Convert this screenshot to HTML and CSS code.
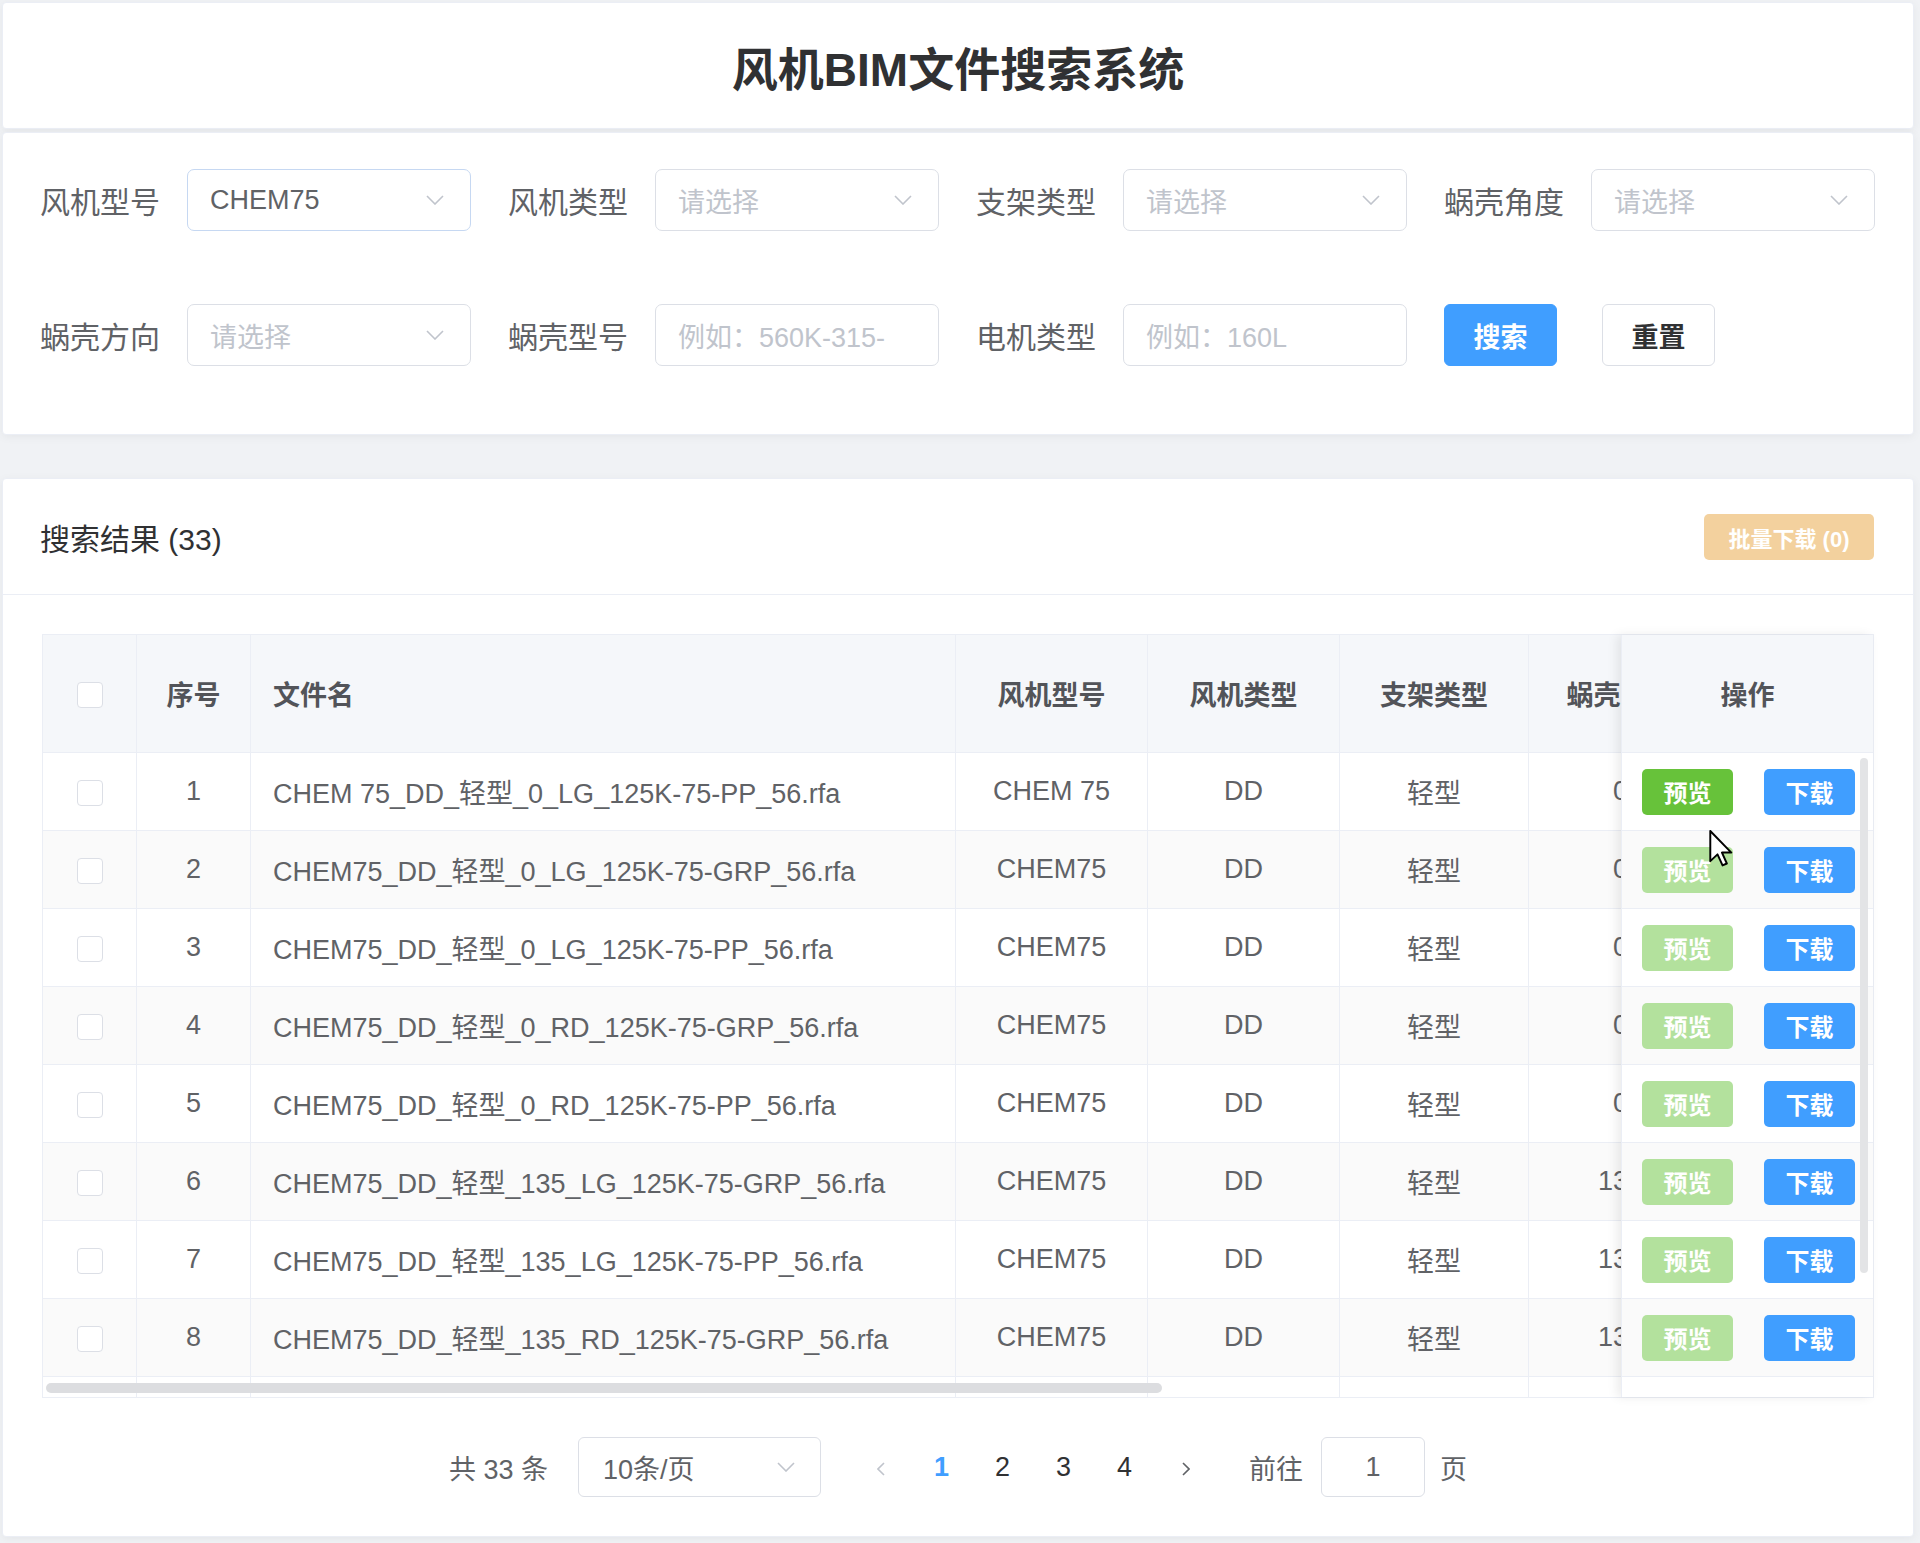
FILE: index.html
```html
<!DOCTYPE html>
<html lang="zh-CN">
<head>
    <meta charset="UTF-8">
    <meta name="viewport" content="width=device-width, initial-scale=1.0">
    <title>风机BIM文件搜索系统</title>
    <link rel="stylesheet" href="styles.css">
</head>
<body>
    <!-- 标题 -->
    <div class="card page-header">
        <h1>风机BIM文件搜索系统</h1>
    </div>

    <!-- 搜索条件 -->
    <div class="card search-card">
        <div class="search-form">
            <div class="form-item">
                <label class="form-label">风机型号</label>
                <div class="select is-hover">
                    <span class="value">CHEM75</span>
                    <svg class="chevron" viewBox="0 0 18 10" width="18" height="10"><polyline points="1,1 9,9 17,1"/></svg>
                </div>
            </div>
            <div class="form-item">
                <label class="form-label">风机类型</label>
                <div class="select">
                    <span class="placeholder">请选择</span>
                    <svg class="chevron" viewBox="0 0 18 10" width="18" height="10"><polyline points="1,1 9,9 17,1"/></svg>
                </div>
            </div>
            <div class="form-item">
                <label class="form-label">支架类型</label>
                <div class="select">
                    <span class="placeholder">请选择</span>
                    <svg class="chevron" viewBox="0 0 18 10" width="18" height="10"><polyline points="1,1 9,9 17,1"/></svg>
                </div>
            </div>
            <div class="form-item">
                <label class="form-label">蜗壳角度</label>
                <div class="select">
                    <span class="placeholder">请选择</span>
                    <svg class="chevron" viewBox="0 0 18 10" width="18" height="10"><polyline points="1,1 9,9 17,1"/></svg>
                </div>
            </div>
            <div class="form-item">
                <label class="form-label">蜗壳方向</label>
                <div class="select">
                    <span class="placeholder">请选择</span>
                    <svg class="chevron" viewBox="0 0 18 10" width="18" height="10"><polyline points="1,1 9,9 17,1"/></svg>
                </div>
            </div>
            <div class="form-item">
                <label class="form-label">蜗壳型号</label>
                <div class="input"><span class="placeholder">例如：560K-315-</span></div>
            </div>
            <div class="form-item">
                <label class="form-label">电机类型</label>
                <div class="input"><span class="placeholder">例如：160L</span></div>
            </div>
            <div class="form-item form-buttons">
                <button class="btn btn-primary">搜索</button>
                <button class="btn btn-default">重置</button>
            </div>
        </div>
    </div>

    <!-- 搜索结果 -->
    <div class="card result-card">
        <div class="result-header">
            <span class="result-title">搜索结果 (33)</span>
            <button class="btn-batch" disabled>批量下载 (0)</button>
        </div>

        <div class="result-body">
            <div class="table">
                <div class="table-main">
                    <table class="data-table">
                        <colgroup>
                            <col style="width:94px">
                            <col style="width:114px">
                            <col style="width:705px">
                            <col style="width:192px">
                            <col style="width:192px">
                            <col style="width:189px">
                            <col style="width:184px">
                        </colgroup>
                        <thead>
                            <tr>
                                <th><span class="checkbox"></span></th>
                                <th>序号</th>
                                <th class="left">文件名</th>
                                <th>风机型号</th>
                                <th>风机类型</th>
                                <th>支架类型</th>
                                <th>蜗壳角度</th>
                            </tr>
                        </thead>
                        <tbody>
                            <tr>
                                <td><span class="checkbox"></span></td><td>1</td>
                                <td class="left">CHEM 75_DD_轻型_0_LG_125K-75-PP_56.rfa</td>
                                <td>CHEM 75</td><td>DD</td><td>轻型</td><td>0</td>
                            </tr>
                            <tr>
                                <td><span class="checkbox"></span></td><td>2</td>
                                <td class="left">CHEM75_DD_轻型_0_LG_125K-75-GRP_56.rfa</td>
                                <td>CHEM75</td><td>DD</td><td>轻型</td><td>0</td>
                            </tr>
                            <tr>
                                <td><span class="checkbox"></span></td><td>3</td>
                                <td class="left">CHEM75_DD_轻型_0_LG_125K-75-PP_56.rfa</td>
                                <td>CHEM75</td><td>DD</td><td>轻型</td><td>0</td>
                            </tr>
                            <tr>
                                <td><span class="checkbox"></span></td><td>4</td>
                                <td class="left">CHEM75_DD_轻型_0_RD_125K-75-GRP_56.rfa</td>
                                <td>CHEM75</td><td>DD</td><td>轻型</td><td>0</td>
                            </tr>
                            <tr>
                                <td><span class="checkbox"></span></td><td>5</td>
                                <td class="left">CHEM75_DD_轻型_0_RD_125K-75-PP_56.rfa</td>
                                <td>CHEM75</td><td>DD</td><td>轻型</td><td>0</td>
                            </tr>
                            <tr>
                                <td><span class="checkbox"></span></td><td>6</td>
                                <td class="left">CHEM75_DD_轻型_135_LG_125K-75-GRP_56.rfa</td>
                                <td>CHEM75</td><td>DD</td><td>轻型</td><td>135</td>
                            </tr>
                            <tr>
                                <td><span class="checkbox"></span></td><td>7</td>
                                <td class="left">CHEM75_DD_轻型_135_LG_125K-75-PP_56.rfa</td>
                                <td>CHEM75</td><td>DD</td><td>轻型</td><td>135</td>
                            </tr>
                            <tr>
                                <td><span class="checkbox"></span></td><td>8</td>
                                <td class="left">CHEM75_DD_轻型_135_RD_125K-75-GRP_56.rfa</td>
                                <td>CHEM75</td><td>DD</td><td>轻型</td><td>135</td>
                            </tr>
                            <tr class="filler-row">
                                <td></td><td></td><td></td><td></td><td></td><td></td><td></td>
                            </tr>
                        </tbody>
                    </table>
                    <div class="hscroll-thumb"></div>
                </div>

                <div class="table-fixed">
                    <table class="fixed-table">
                        <thead>
                            <tr><th>操作</th></tr>
                        </thead>
                        <tbody>
                            <tr><td><div class="ops"><button class="btn-sm btn-success">预览</button><button class="btn-sm btn-blue">下载</button></div></td></tr>
                            <tr><td><div class="ops"><button class="btn-sm btn-success" disabled>预览</button><button class="btn-sm btn-blue">下载</button></div></td></tr>
                            <tr><td><div class="ops"><button class="btn-sm btn-success" disabled>预览</button><button class="btn-sm btn-blue">下载</button></div></td></tr>
                            <tr><td><div class="ops"><button class="btn-sm btn-success" disabled>预览</button><button class="btn-sm btn-blue">下载</button></div></td></tr>
                            <tr><td><div class="ops"><button class="btn-sm btn-success" disabled>预览</button><button class="btn-sm btn-blue">下载</button></div></td></tr>
                            <tr><td><div class="ops"><button class="btn-sm btn-success" disabled>预览</button><button class="btn-sm btn-blue">下载</button></div></td></tr>
                            <tr><td><div class="ops"><button class="btn-sm btn-success" disabled>预览</button><button class="btn-sm btn-blue">下载</button></div></td></tr>
                            <tr><td><div class="ops"><button class="btn-sm btn-success" disabled>预览</button><button class="btn-sm btn-blue">下载</button></div></td></tr>
                            <tr class="filler-row"><td></td></tr>
                        </tbody>
                    </table>
                    <div class="vscroll-thumb"></div>
                    <svg class="mouse-cursor" viewBox="0 0 12 19" width="24" height="37">
                        <path d="M0.5,0.5 L0.5,16 L4.2,12.5 L6.8,18.2 L9,17.2 L6.5,11.6 L11.3,11.6 Z"/>
                    </svg>
                </div>
            </div>

            <!-- 分页 -->
            <div class="pagination">
                <span class="total">共 33 条</span>
                <div class="page-size">
                    <span>10条/页</span>
                    <svg class="chevron" viewBox="0 0 18 10" width="18" height="10"><polyline points="1,1 9,9 17,1"/></svg>
                </div>
                <span class="pager-btn disabled">
                    <svg viewBox="0 0 8 14" width="8" height="14"><polyline points="7,1 1,7 7,13"/></svg>
                </span>
                <span class="pager-btn active">1</span>
                <span class="pager-btn">2</span>
                <span class="pager-btn">3</span>
                <span class="pager-btn">4</span>
                <span class="pager-btn">
                    <svg viewBox="0 0 8 14" width="8" height="14"><polyline points="1,1 7,7 1,13"/></svg>
                </span>
                <span class="jump">前往</span>
                <div class="jump-input">1</div>
                <span class="jump-unit">页</span>
            </div>
        </div>
    </div>
</body>
</html>
```

FILE: styles.css
```css
:root {
    --primary-color: #409eff;       /* 蓝 - 主按钮 */
    --success-color: #67c23a;       /* 绿 - 预览 */
    --success-disabled: #b3e19d;
    --warning-disabled: #f3d19e;    /* 批量下载 (禁用) */
    --text-main: #303133;
    --text-regular: #606266;
    --text-header: #525459;
    --text-placeholder: #c0c4cc;
    --border-color: #dcdfe6;
    --border-light: #ebeef5;
    --background-color: #f0f2f5;
}

* {
    box-sizing: border-box;
}

body {
    margin: 0;
    padding: 2px 6px 6px 2px;
    background-color: var(--background-color);
    font-family: "Liberation Sans", "Noto Sans CJK SC", sans-serif;
    color: var(--text-regular);
}

.card {
    background-color: #ffffff;
    border: 1px solid var(--border-light);
    border-radius: 4px;
    box-shadow: 0 2px 10px rgba(0, 0, 0, 0.05);
}

/* 标题 */
.page-header {
    height: 127px;
    display: flex;
    align-items: center;
    justify-content: center;
}

.page-header h1 {
    margin: 0;
    font-size: 46px;
    font-weight: 700;
    color: var(--text-main);
}

/* 搜索条件 */
.search-card {
    margin-top: 3px;
    padding: 36px 37px 68px;
}

.search-form {
    display: grid;
    grid-template-columns: repeat(4, 431px);
    column-gap: 37px;
    row-gap: 73px;
}

.form-item {
    display: flex;
    align-items: center;
    height: 62px;
}

.form-label {
    width: 147px;
    flex-shrink: 0;
    font-size: 30px;
    color: var(--text-regular);
}

.select, .input {
    width: 284px;
    height: 62px;
    display: flex;
    align-items: center;
    justify-content: space-between;
    padding: 0 26px 0 22px;
    border: 1px solid var(--border-color);
    border-radius: 7px;
    font-size: 27px;
    color: var(--text-regular);
    background-color: #ffffff;
}

.select.is-hover {
    border-color: #c6d8f2;
}

.placeholder {
    color: var(--text-placeholder);
}

.chevron polyline {
    fill: none;
    stroke: var(--text-placeholder);
    stroke-width: 1.6;
}

.form-buttons {
    gap: 45px;
}

.btn {
    width: 113px;
    height: 62px;
    border-radius: 6px;
    font-family: inherit;
    font-size: 27px;
    font-weight: 700;
    cursor: pointer;
}

.btn-primary {
    background-color: var(--primary-color);
    border: 1px solid var(--primary-color);
    color: #ffffff;
}

.btn-default {
    background-color: #ffffff;
    border: 1px solid var(--border-color);
    color: var(--text-main);
}

/* 搜索结果 */
.result-card {
    margin-top: 43px;
}

.result-header {
    height: 116px;
    display: flex;
    align-items: center;
    justify-content: space-between;
    padding: 0 39px 0 37px;
    border-bottom: 1px solid var(--border-light);
}

.result-title {
    font-size: 30px;
    color: var(--text-main);
}

.btn-batch {
    width: 170px;
    height: 46px;
    border: none;
    border-radius: 5px;
    background-color: var(--warning-disabled);
    color: #ffffff;
    font-family: inherit;
    font-size: 22px;
    font-weight: 700;
}

.result-body {
    padding: 39px;
}

/* 表格 */
.table {
    display: flex;
    border: 1px solid var(--border-light);
}

.table-main {
    flex: 1;
    min-width: 0;
    overflow: hidden;
    position: relative;
}

.data-table, .fixed-table {
    border-collapse: separate;
    border-spacing: 0;
    table-layout: fixed;
    font-size: 27px;
}

.data-table {
    width: 1670px;
}

.fixed-table {
    width: 100%;
}

th, td {
    padding: 0;
    text-align: center;
    white-space: nowrap;
    overflow: hidden;
    border-bottom: 1px solid var(--border-light);
}

.data-table th, .data-table td {
    border-right: 1px solid var(--border-light);
}

th {
    height: 118px;
    background-color: #f5f7fa;
    color: var(--text-header);
    font-weight: 700;
}

td {
    height: 78px;
    color: var(--text-regular);
}

th.left, td.left {
    text-align: left;
    padding-left: 22px;
}

tbody tr:nth-child(even) td {
    background-color: #fafafa;
}

tr.filler-row td {
    height: 20px;
    border-bottom: none;
}

.checkbox {
    display: inline-block;
    width: 26px;
    height: 26px;
    vertical-align: middle;
    border: 1px solid var(--border-color);
    border-radius: 4px;
    background-color: #ffffff;
}

.hscroll-thumb {
    position: absolute;
    left: 3px;
    bottom: 4px;
    width: 1116px;
    height: 10px;
    border-radius: 5px;
    background-color: #dcdde0;
}

.table-fixed {
    width: 252px;
    flex-shrink: 0;
    position: relative;
    background-color: #ffffff;
    box-shadow: -4px 0 10px rgba(0, 0, 0, 0.08);
}

.fixed-table th, .fixed-table td {
    border-left: 1px solid var(--border-light);
}

.ops {
    display: flex;
    gap: 31px;
    padding-left: 20px;
}

.btn-sm {
    width: 91px;
    height: 46px;
    border: none;
    border-radius: 5px;
    color: #ffffff;
    font-family: inherit;
    font-size: 24px;
    font-weight: 700;
    cursor: pointer;
}

.btn-success {
    background-color: var(--success-color);
}

.btn-success:disabled {
    background-color: var(--success-disabled);
    cursor: not-allowed;
}

.btn-blue {
    background-color: var(--primary-color);
}

.vscroll-thumb {
    position: absolute;
    left: 239px;
    top: 123px;
    width: 8px;
    height: 515px;
    border-radius: 4px;
    background-color: #e3e4e6;
}

.mouse-cursor {
    position: absolute;
    left: 88px;
    top: 195px;
}

.mouse-cursor path {
    fill: #ffffff;
    stroke: #000000;
    stroke-width: 1;
    stroke-linejoin: round;
}

/* 分页 */
.pagination {
    height: 60px;
    margin-top: 39px;
    display: flex;
    align-items: center;
    justify-content: center;
    font-size: 27px;
    color: var(--text-regular);
}

.total {
    margin-right: 30px;
}

.page-size {
    width: 243px;
    height: 60px;
    display: flex;
    align-items: center;
    justify-content: space-between;
    padding: 0 25px 0 24px;
    border: 1px solid var(--border-color);
    border-radius: 6px;
    margin-right: 29px;
}

.pager-btn {
    width: 61px;
    text-align: center;
    color: var(--text-main);
}

.pager-btn svg polyline {
    fill: none;
    stroke: var(--text-regular);
    stroke-width: 1.6;
}

.pager-btn.disabled svg polyline {
    stroke: var(--text-placeholder);
}

.pager-btn.active {
    color: var(--primary-color);
    font-weight: 700;
}

.jump {
    margin-left: 33px;
}

.jump-input {
    width: 104px;
    height: 60px;
    margin: 0 15px 0 18px;
    display: flex;
    align-items: center;
    justify-content: center;
    border: 1px solid var(--border-color);
    border-radius: 6px;
    color: var(--text-regular);
}
```
